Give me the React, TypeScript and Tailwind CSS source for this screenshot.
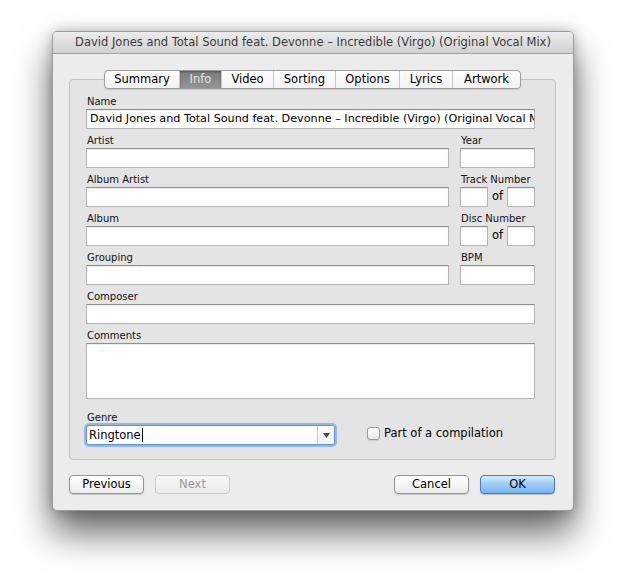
import React from "react";

const font = { fontFamily: '"DejaVu Sans", "Liberation Sans", sans-serif' };

const tabs = [
  { label: "Summary", w: "w-[74px]" },
  { label: "Info", w: "w-[42px]", active: true },
  { label: "Video", w: "w-[52px]" },
  { label: "Sorting", w: "w-[62px]" },
  { label: "Options", w: "w-[64px]" },
  { label: "Lyrics", w: "w-[53px]" },
  { label: "Artwork", w: "w-[68px]" },
];

function Label({ children }: { children: React.ReactNode }) {
  return <div className="h-[14px] leading-[14px] text-[10px] text-[#111] pl-[1px]">{children}</div>;
}

function Field({
  value,
  className = "",
  textSize = "text-[11.5px]",
}: {
  value?: string;
  className?: string;
  textSize?: string;
}) {
  return (
    <div
      className={`h-[20px] bg-white border border-[#b4b4b4] border-t-[#8f8f8f] shadow-[inset_0_1px_1px_rgba(0,0,0,0.08)] px-[3px] ${textSize} leading-[18px] text-black overflow-hidden whitespace-nowrap ${className}`}
    >
      {value}
    </div>
  );
}

function Button({ children, disabled, primary }: { children: React.ReactNode; disabled?: boolean; primary?: boolean }) {
  const base = "w-[75px] h-[19px] rounded-[4px] text-[11.5px] leading-[17px] text-center border";
  if (primary)
    return (
      <div className={`${base} border-[#4f78b4] bg-gradient-to-b from-[#d4ebfd] via-[#9ccbf6] to-[#74b6f2] text-black shadow-[0_1px_1px_rgba(0,0,0,0.2)]`}>
        {children}
      </div>
    );
  if (disabled)
    return (
      <div className={`${base} border-[#c9c9c9] bg-gradient-to-b from-[#f7f7f7] to-[#ececec] text-[#9a9a9a]`}>
        {children}
      </div>
    );
  return (
    <div className={`${base} border-[#959595] bg-gradient-to-b from-white to-[#ececec] text-black shadow-[0_1px_1px_rgba(0,0,0,0.15)]`}>
      {children}
    </div>
  );
}

export default function App() {
  return (
    <div className="w-[625px] h-[582px] bg-white pt-[31px] pl-[52px]" style={font}>
      <div className="w-[522px] h-[480px] bg-[#ececec] rounded-[5px] border border-[#9c9c9c] shadow-[0_22px_36px_rgba(0,0,0,0.6),0_0_14px_rgba(0,0,0,0.25)] flex flex-col overflow-hidden">
        {/* Title bar */}
        <div className="h-[22px] shrink-0 bg-gradient-to-b from-[#ececec] to-[#d1d1d1] border-b border-[#a3a3a3] flex items-center justify-center text-[11.5px] text-[#3a3a3a] whitespace-nowrap">
          David Jones and Total Sound feat. Devonne – Incredible (Virgo) (Original Vocal Mix)
        </div>

        <div className="pl-[16px] pr-[17px] pt-[16px] flex flex-col">
          {/* Tabs */}
          <div className="flex justify-center relative z-10">
            <div className="flex h-[19px] rounded-[4px] border border-[#9e9e9e] bg-gradient-to-b from-white to-[#f1f1f1] shadow-[0_1px_1px_rgba(0,0,0,0.12)] overflow-hidden">
              {tabs.map((t, i) => (
                <div
                  key={t.label}
                  className={`${t.w} text-center text-[11.5px] leading-[17px] ${i > 0 ? "border-l border-[#c6c6c6]" : ""} ${
                    t.active
                      ? "bg-gradient-to-b from-[#7a7a7a] to-[#959595] text-[#e4e4e4] shadow-[inset_0_1px_2px_rgba(0,0,0,0.35)] border-[#7a7a7a]"
                      : "text-black"
                  }`}
                >
                  {t.label}
                </div>
              ))}
            </div>
          </div>

          {/* Group box */}
          <div className="-mt-[10px] bg-[#e4e4e4] border border-[#c3c3c3] rounded-[4px] pl-[16px] pr-[20px] pt-[15px] pb-[14px] flex flex-col">
            <Label>Name</Label>
            <Field
              textSize="text-[11.2px]"
              value="David Jones and Total Sound feat. Devonne – Incredible (Virgo) (Original Vocal Mix)"
            />

            <div className="grid grid-cols-[1fr_75px] gap-x-[11px] mt-[5px]">
              <div className="flex flex-col">
                <Label>Artist</Label>
                <Field />
              </div>
              <div className="flex flex-col">
                <Label>Year</Label>
                <Field />
              </div>
            </div>

            <div className="grid grid-cols-[1fr_75px] gap-x-[11px] mt-[5px]">
              <div className="flex flex-col">
                <Label>Album Artist</Label>
                <Field />
              </div>
              <div className="flex flex-col">
                <Label>Track Number</Label>
                <div className="flex items-center">
                  <Field className="w-[28px]" />
                  <span className="w-[19px] text-center text-[11.5px] text-black">of</span>
                  <Field className="w-[28px]" />
                </div>
              </div>
            </div>

            <div className="grid grid-cols-[1fr_75px] gap-x-[11px] mt-[5px]">
              <div className="flex flex-col">
                <Label>Album</Label>
                <Field />
              </div>
              <div className="flex flex-col">
                <Label>Disc Number</Label>
                <div className="flex items-center">
                  <Field className="w-[28px]" />
                  <span className="w-[19px] text-center text-[11.5px] text-black">of</span>
                  <Field className="w-[28px]" />
                </div>
              </div>
            </div>

            <div className="grid grid-cols-[1fr_75px] gap-x-[11px] mt-[5px]">
              <div className="flex flex-col">
                <Label>Grouping</Label>
                <Field />
              </div>
              <div className="flex flex-col">
                <Label>BPM</Label>
                <Field />
              </div>
            </div>

            <div className="flex flex-col mt-[5px]">
              <Label>Composer</Label>
              <Field />
            </div>

            <div className="flex flex-col mt-[5px]">
              <Label>Comments</Label>
              <Field className="h-[56px]" />
            </div>

            <div className="flex items-end mt-[12px]">
              <div className="flex flex-col">
                <Label>Genre</Label>
                <div className="w-[249px] h-[20px] rounded-[3px] border border-[#5e91d8] shadow-[0_0_0_2px_rgba(120,170,232,0.75)] bg-white flex">
                  <div className="flex-1 px-[2px] text-[11.5px] leading-[18px] text-black flex items-center">
                    Ringtone<span className="w-[1px] h-[14px] bg-black ml-[1px]" />
                  </div>
                  <div className="w-[17px] border-l border-[#c8c8c8] flex items-center justify-center bg-gradient-to-b from-white to-[#f2f2f2] rounded-r-[2px]">
                    <svg width="7" height="5" viewBox="0 0 7 5">
                      <path d="M0 0 H7 L3.5 5 Z" fill="#4a4a4a" />
                    </svg>
                  </div>
                </div>
              </div>
              <div className="flex items-center ml-[32px] mb-[3px]">
                <div className="w-[13px] h-[13px] rounded-[3px] border border-[#9a9a9a] bg-gradient-to-b from-white to-[#e8e8e8] shadow-[0_1px_1px_rgba(0,0,0,0.1)]" />
                <span className="ml-[4px] text-[11.5px] text-black">Part of a compilation</span>
              </div>
            </div>
          </div>

          {/* Buttons */}
          <div className="flex items-center mt-[15px] pr-[1px]">
            <Button>Previous</Button>
            <div className="ml-[11px]">
              <Button disabled>Next</Button>
            </div>
            <div className="ml-auto">
              <Button>Cancel</Button>
            </div>
            <div className="ml-[11px]">
              <Button primary>OK</Button>
            </div>
          </div>
        </div>
      </div>
    </div>
  );
}
